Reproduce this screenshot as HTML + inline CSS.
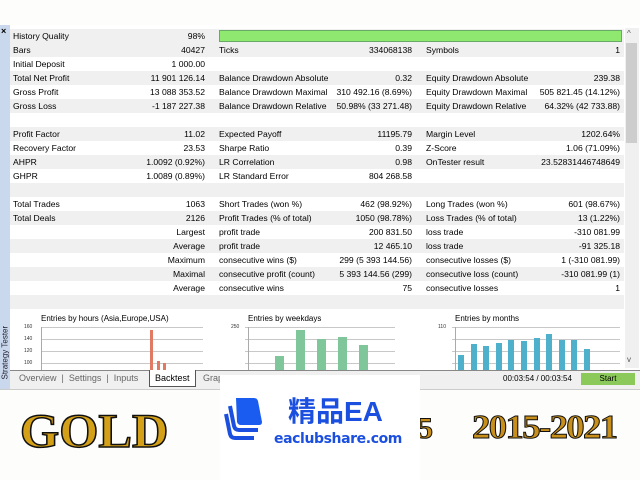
<!DOCTYPE html>
<html><head><meta charset="utf-8"><style>
*{margin:0;padding:0;box-sizing:border-box}
body{width:640px;height:480px;overflow:hidden;background:#fdfdfb;position:relative;font-family:"Liberation Sans",sans-serif;font-size:8.6px;color:#000}
.a{position:absolute;white-space:nowrap}
.row{position:absolute;left:10px;width:614px;height:14px}
.g{background:#f0f0f0}
.w{background:#fff}
.l,.v{position:absolute;top:2px;line-height:10px}
.r{text-align:right}
.gl{position:absolute;height:1px;background:#c8c8c8}
.ax{position:absolute;font-size:5px;color:#333}
</style></head><body>
<div class="a" style="left:0;top:25px;width:640px;height:365px;background:#fff"></div>
<div class="a" style="left:0;top:25px;width:10px;height:365px;background:#c9d8ec"></div>
<div class="a" style="left:1px;top:26px;font-size:9px;font-weight:bold">×</div>
<div class="a" style="left:-28px;top:342px;transform:rotate(-90deg);font-size:8px;color:#223;width:66px">Strategy Tester</div>
<div class="a" style="left:625px;top:28px;width:14px;height:340px;background:#f0f0f0"></div>
<div class="a" style="left:626px;top:43px;width:11px;height:100px;background:#cdcdcd"></div>
<div class="a" style="left:627px;top:29px;font-size:8px;color:#555">^</div>
<div class="a" style="left:627px;top:355px;font-size:8px;color:#555">v</div>
<div id="rows"></div>
<div class="a" style="left:219px;top:30px;width:403px;height:12px;background:#8fe870;border:1px solid #6a6"></div>
<div class="a" style="left:10px;top:311px;width:614px;height:59px;background:#fff"></div>
<div class="a" style="left:41px;top:314px;font-size:8px">Entries by hours (Asia,Europe,USA)</div>
<div class="a" style="left:248px;top:314px;font-size:8px">Entries by weekdays</div>
<div class="a" style="left:455px;top:314px;font-size:8px">Entries by months</div>
<div class="ax" style="left:24px;top:324px">160</div><div class="ax" style="left:24px;top:336px">140</div><div class="ax" style="left:24px;top:348px">120</div><div class="ax" style="left:24px;top:360px">100</div>
<div class="ax" style="left:231px;top:324px">250</div><div class="ax" style="left:438px;top:324px">110</div>
<div class="gl" style="left:41px;top:327px;width:162px"></div><div class="gl" style="left:41px;top:339px;width:162px"></div><div class="gl" style="left:41px;top:351px;width:162px"></div><div class="gl" style="left:41px;top:363px;width:162px"></div>
<div class="gl" style="left:245px;top:327px;width:150px"></div><div class="gl" style="left:245px;top:339px;width:150px"></div><div class="gl" style="left:245px;top:351px;width:150px"></div><div class="gl" style="left:245px;top:363px;width:150px"></div>
<div class="gl" style="left:452px;top:327px;width:168px"></div><div class="gl" style="left:452px;top:339px;width:168px"></div><div class="gl" style="left:452px;top:351px;width:168px"></div><div class="gl" style="left:452px;top:363px;width:168px"></div>
<div class="a" style="left:41px;top:327px;width:1px;height:43px;background:#aaa"></div>
<div class="a" style="left:248px;top:327px;width:1px;height:43px;background:#aaa"></div>
<div class="a" style="left:455px;top:327px;width:1px;height:43px;background:#aaa"></div>
<div id="bars"></div>
<div class="a" style="left:10px;top:370px;width:630px;height:19px;background:#f0f0f0;border-top:1px solid #888"></div>
<div class="a" style="left:19px;top:373px;font-size:9px;color:#666">Overview &nbsp;|&nbsp; Settings &nbsp;|&nbsp; Inputs</div>
<div class="a" style="left:149px;top:370px;width:47px;height:17px;background:#fff;border:1px solid #555;border-top:none"></div>
<div class="a" style="left:155px;top:373px;font-size:9px">Backtest</div>
<div class="a" style="left:203px;top:373px;font-size:9px;color:#666">Grap</div>
<div class="a" style="left:503px;top:374px;font-size:8px">00:03:54 / 00:03:54</div>
<div class="a" style="left:581px;top:373px;width:54px;height:12px;background:#8bc95a;font-size:8px;text-align:center;line-height:12px">Start</div>
<div class="a" style="left:0;top:389px;width:640px;height:1px;background:#ccc"></div>
<div class="a" style="left:20px;top:404px;font-family:'Liberation Serif',serif;font-weight:bold;font-size:48px;color:#d4a017;-webkit-text-stroke:1.5px #111;transform:scaleX(1.05);transform-origin:left">GOLD</div>
<div class="a" style="left:418px;top:412px;font-family:'Liberation Serif',serif;font-weight:bold;font-size:30px;color:#c8901a;-webkit-text-stroke:1px #111">5</div>
<div class="a" style="left:472px;top:409px;font-family:'Liberation Serif',serif;font-weight:bold;font-size:34px;color:#c8901a;-webkit-text-stroke:1px #111;letter-spacing:-1.5px;transform:scaleX(1.08);transform-origin:left">2015-2021</div>
<div class="a" style="left:220px;top:375px;width:200px;height:105px;background:#fff"></div>
<svg class="a" style="left:224px;top:396px" width="46" height="48" viewBox="0 0 46 48">
<path d="M12 2 L30 2 Q33 2 34 5 L38 26 Q38 29 35 29 L17 29 Q14 29 13 26 Z" fill="#1b5cf0"/>
<path d="M6 10 L10 30 Q11 34 15 34 L34 34" fill="none" stroke="#1b4fe0" stroke-width="4"/>
<path d="M2 18 L6 38 Q7 42 11 42 L30 42" fill="none" stroke="#1b4fe0" stroke-width="4"/>
</svg>
<div class="a" style="left:288px;top:395px;font-family:'Liberation Sans','Noto Sans CJK SC',sans-serif;font-weight:bold;font-size:28px;color:#1b4fe0;line-height:34px">精品EA</div>
<div class="a" style="left:274px;top:431px;font-family:'DejaVu Sans',sans-serif;font-size:14px;color:#1b4fe0;font-weight:bold;letter-spacing:-0.4px">eaclubshare.com</div>
<script>
var R=[
["g","History Quality","98%","","","",""],
["g","Bars","40427","Ticks","334068138","Symbols","1"],
["w","Initial Deposit","1 000.00","","","",""],
["g","Total Net Profit","11 901 126.14","Balance Drawdown Absolute","0.32","Equity Drawdown Absolute","239.38"],
["w","Gross Profit","13 088 353.52","Balance Drawdown Maximal","310 492.16 (8.69%)","Equity Drawdown Maximal","505 821.45 (14.12%)"],
["g","Gross Loss","-1 187 227.38","Balance Drawdown Relative","50.98% (33 271.48)","Equity Drawdown Relative","64.32% (42 733.88)"],
["w","","","","","",""],
["g","Profit Factor","11.02","Expected Payoff","11195.79","Margin Level","1202.64%"],
["w","Recovery Factor","23.53","Sharpe Ratio","0.39","Z-Score","1.06 (71.09%)"],
["g","AHPR","1.0092 (0.92%)","LR Correlation","0.98","OnTester result","23.52831446748649"],
["w","GHPR","1.0089 (0.89%)","LR Standard Error","804 268.58","",""],
["g","","","","","",""],
["w","Total Trades","1063","Short Trades (won %)","462 (98.92%)","Long Trades (won %)","601 (98.67%)"],
["g","Total Deals","2126","Profit Trades (% of total)","1050 (98.78%)","Loss Trades (% of total)","13 (1.22%)"],
["w","","Largest","profit trade","200 831.50","loss trade","-310 081.99"],
["g","","Average","profit trade","12 465.10","loss trade","-91 325.18"],
["w","","Maximum","consecutive wins ($)","299 (5 393 144.56)","consecutive losses ($)","1 (-310 081.99)"],
["g","","Maximal","consecutive profit (count)","5 393 144.56 (299)","consecutive loss (count)","-310 081.99 (1)"],
["w","","Average","consecutive wins","75","consecutive losses","1"],
["g","","","","","",""]];
var h="";
R.forEach(function(r,i){var y=29+i*14;
h+='<div class="row '+r[0]+'" style="top:'+y+'px">'+
'<div class="l" style="left:3px">'+r[1]+'</div>'+
'<div class="v r" style="right:419px">'+r[2]+'</div>'+
'<div class="l" style="left:209px">'+r[3]+'</div>'+
'<div class="v r" style="right:212px">'+r[4]+'</div>'+
'<div class="l" style="left:416px">'+r[5]+'</div>'+
'<div class="v r" style="right:4px">'+r[6]+'</div></div>';});
document.getElementById("rows").innerHTML=h;
var b="";
function bar(x,y,w,c){b+='<div class="a" style="left:'+x+'px;top:'+y+'px;width:'+w+'px;height:'+(370-y)+'px;background:'+c+'"></div>';}
bar(150,330,3,"#e07a62");bar(157,361,3,"#e07a62");bar(163,363,3,"#e07a62");
[[275,356],[296,330],[317,339],[338,337],[359,345]].forEach(function(p){bar(p[0],p[1],9,"#7fc79a");});
[355,344,346,343,340,341,338,334,340,340,349].forEach(function(y,i){bar(Math.round(458+i*12.6),y,6,"#4fb0cc");});
document.getElementById("bars").innerHTML=b;
</script>
</body></html>
